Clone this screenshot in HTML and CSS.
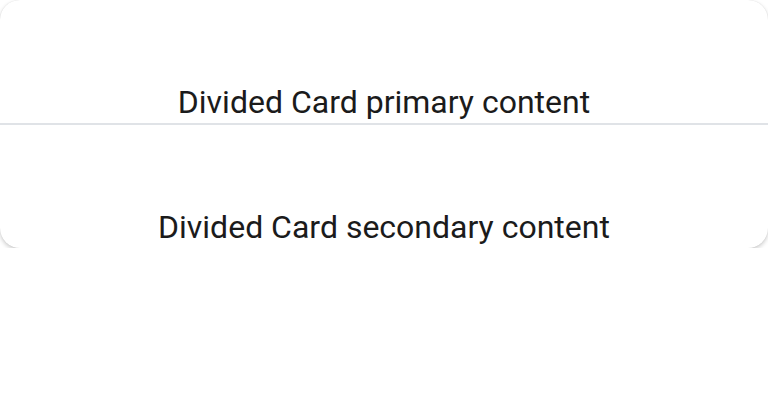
FILE: index.html
```html
<!DOCTYPE html>
<html lang="en">
<head>
<meta charset="utf-8">
<title>Divided Card</title>
<link rel="stylesheet" href="styles.css">
</head>
<body>
  <div class="card">
    <div class="section">
      <span class="content">Divided Card primary content</span>
    </div>
    <div class="divider"></div>
    <div class="section">
      <span class="content">Divided Card secondary content</span>
    </div>
  </div>
</body>
</html>
```

FILE: styles.css
```css
html, body {
  margin: 0;
  padding: 0;
  background: #ffffff;
}

body {
  font-family: Roboto, "Noto Sans", sans-serif;
  color: #1b1b1b;
}

.card {
  width: 768px;
  box-sizing: border-box;
  background: #ffffff;
  border-radius: 20px;
  box-shadow: 0 2px 4px rgba(0, 0, 0, 0.2), 0 0 1px rgba(0, 0, 0, 0.12);
  overflow: hidden;
}

.section {
  height: 123px;
  box-sizing: border-box;
  display: flex;
  align-items: flex-end;
  justify-content: center;
  padding-bottom: 2px;
}

.content {
  font-size: 32px;
  line-height: 37px;
}

.divider {
  height: 2px;
  background: #e0e3e7;
}
```
